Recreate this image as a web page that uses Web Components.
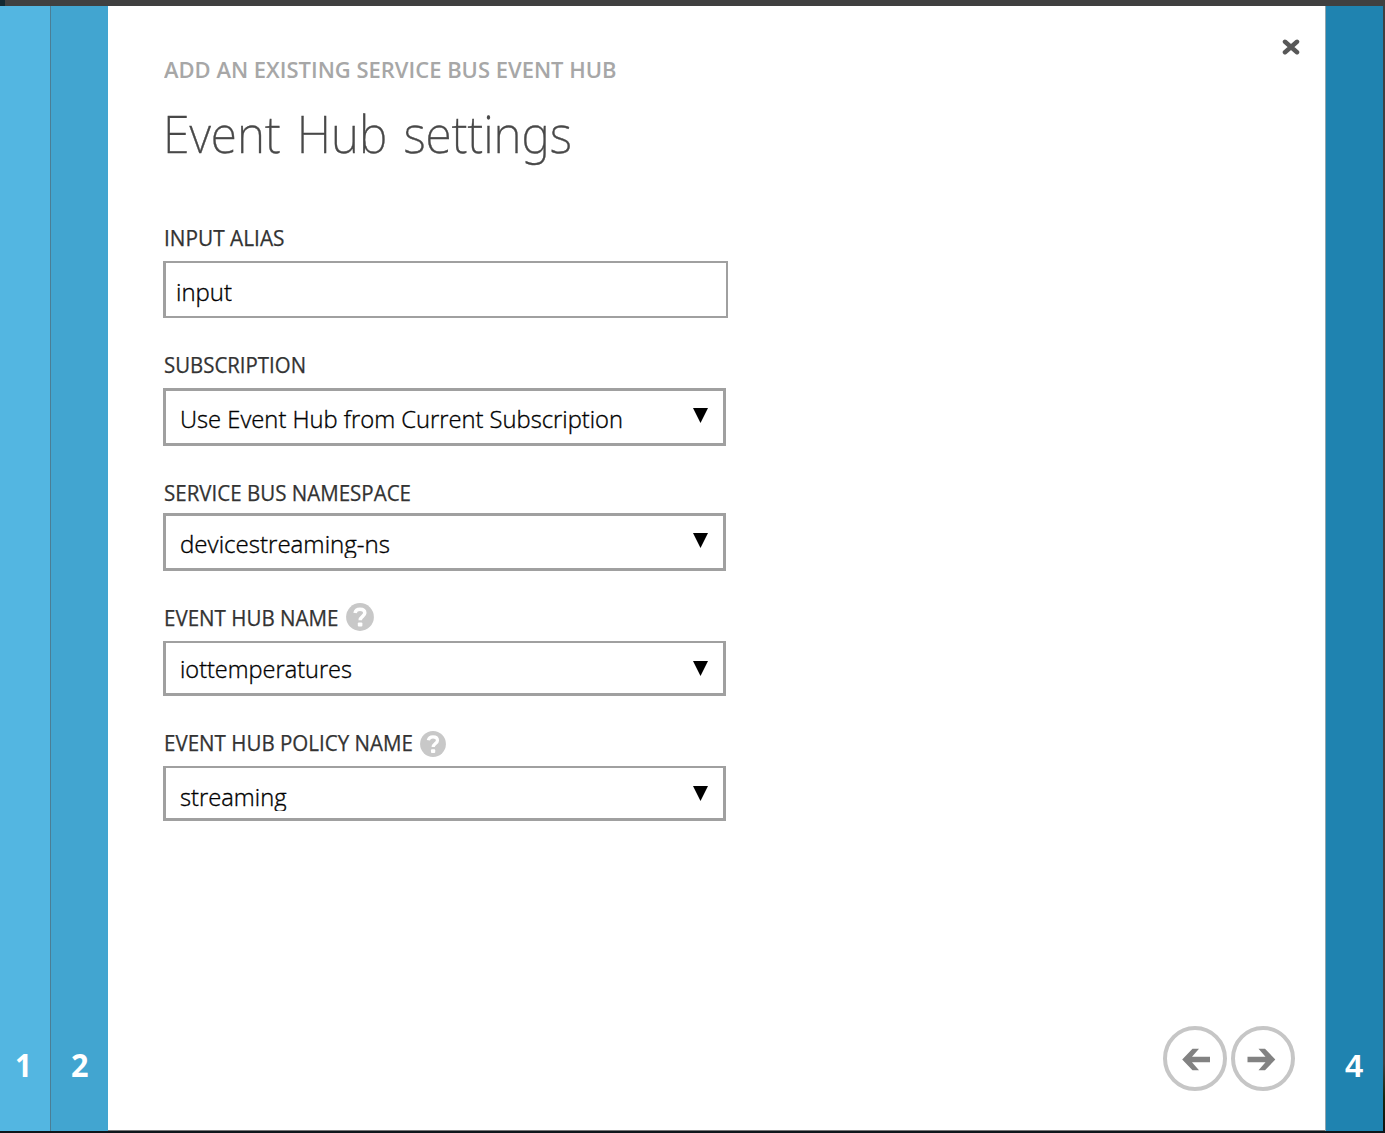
<!DOCTYPE html>
<html lang="en"><head><meta charset="utf-8"><title>Event Hub settings</title>
<style>html,body{margin:0;height:100%;overflow:hidden}body{font-family:"Open Sans","Noto Sans",sans-serif;background:#fff}</style></head>
<body>
<wizard-dialog>
  <wizard-step slot="before" number="1" style="--w:50px;--bg:#53b6e1;--nx:14.5px" text-width="17"></wizard-step>
  <wizard-step slot="before" number="2" style="--w:57px;--bg:#42a5d0;--nx:19.5px;--line:#4b7e95" text-width="17.5"></wizard-step>
  <fit-text slot="kicker" width="452.5">ADD AN EXISTING SERVICE BUS EVENT HUB</fit-text>
  <fit-text slot="title" width="409">Event Hub settings</fit-text>
  <form-field label="INPUT ALIAS" label-width="120.5" value="input" value-width="56" kind="text" style="--w:565px;--h:57px;--bw:2px 2px 2px 3px;--pl:9.5px;--pt:13px;--lh:32px"></form-field>
  <form-field label="SUBSCRIPTION" label-width="142" value="Use Event Hub from Current Subscription" value-width="443" style="--h:58px;--pt:12px;--lh:32px"></form-field>
  <form-field label="SERVICE BUS NAMESPACE" label-width="247" value="devicestreaming-ns" value-width="210" style="--h:58px;--gap:6px"></form-field>
  <form-field label="EVENT HUB NAME" label-width="174.5" value="iottemperatures" value-width="172" help="28" style="--h:55px;--bw:2px 3px 3px 3px;--pt:10px;--lh:32px;--at:17.5px"></form-field>
  <form-field label="EVENT HUB POLICY NAME" label-width="249" value="streaming" value-width="106.5" help="26" style="--h:55px;--bw:2px 3px 3px 3px;--pt:15px;--at:17.5px"></form-field>
  <nav-button slot="nav" direction="back"></nav-button>
  <nav-button slot="nav" direction="next"></nav-button>
  <wizard-step slot="after" number="4" style="--w:57px;--bg:#1f83b0;--nx:18.5px;--line:#8fa5af;--nf:'Liberation Sans',sans-serif;--nb:-1px" text-width="18"></wizard-step>
</wizard-dialog>
<script>
// Text scaled horizontally to a given advance width.
class FitText extends HTMLElement{
  constructor(){super();this.attachShadow({mode:'open'}).innerHTML=`<style>:host{display:block;white-space:nowrap;flex:none}span{display:inline-block;transform-origin:0 50%}</style><span><slot></slot></span>`}
  connectedCallback(){this.fit()}
  fit(){const s=this.shadowRoot.querySelector('span'),w=parseFloat(this.getAttribute('width'));
    s.style.transform='none';const n=s.getBoundingClientRect().width;
    if(n&&w){s.style.transform=`scaleX(${w/n})`;this.style.width=w+'px'}}
}
class HelpIcon extends HTMLElement{
  connectedCallback(){const s=this.getAttribute('size');
    this.attachShadow({mode:'open'}).innerHTML=`<style>:host{display:block;flex:none}svg{display:block}</style>
    <svg width="${s}" height="${s}" viewBox="0 0 28 28"><circle cx="14" cy="14" r="13.9" fill="#c8c8c8"/><path d="M9 10C9.5 7.4 11.3 6.3 14 6.3c2.9 0 4.8 1.5 4.8 3.8 0 3.3-4.6 3.4-4.6 7.2" fill="none" stroke="#fff" stroke-width="3.5"/><rect x="11.8" y="19.6" width="4.6" height="4" rx="1" fill="#fff"/></svg>`}
}
class WizardStep extends HTMLElement{
  connectedCallback(){const line=this.style.getPropertyValue('--line');
    this.attachShadow({mode:'open'}).innerHTML=`<style>:host{display:flex;align-items:flex-end;box-sizing:content-box;width:var(--w);background:var(--bg);${line?'border-left:1px solid var(--line);':''}color:#fff;font:700 31.5px/44px var(--nf,"Open Sans"),sans-serif;flex:none}
    fit-text{padding:0 0 calc(44px + var(--nb,0px)) var(--nx)}</style><fit-text width="${this.getAttribute('text-width')}">${this.getAttribute('number')}</fit-text>`}
}
class FormField extends HTMLElement{
  connectedCallback(){const a=n=>this.getAttribute(n);
    this.attachShadow({mode:'open'}).innerHTML=`<style>
    :host{display:block}
    .label{display:flex;align-items:flex-start;height:28px;gap:7px;margin:0 0 var(--gap,9px) 1px;color:#333;font-size:21px;line-height:28px;-webkit-text-stroke:.25px #333}
    help-icon{margin-top:${a('help')==='26'?'1.5px':'-1px'}}
    .box{display:flex;justify-content:space-between;align-items:flex-start;box-sizing:border-box;width:var(--w,563px);height:var(--h);border:solid #a0a0a0;border-width:var(--bw,3px);padding:0 15px 0 var(--pl,14px);background:#fff}
    .value{margin-top:var(--pt,14px);font-size:23px;font-weight:300;-webkit-text-stroke:.35px #000;line-height:calc(var(--lh,28px) + 1px);height:var(--lh,28px);overflow:hidden;color:#000}
    svg{display:block;margin-top:var(--at,17px)}
    </style><div class="label"><fit-text width="${a('label-width')}">${a('label')}</fit-text>${a('help')?`<help-icon size="${a('help')}"></help-icon>`:''}</div>
    <div class="box"><fit-text class="value" width="${a('value-width')}">${a('value')}</fit-text>${a('kind')==='text'?'':'<svg width="15" height="15"><path d="M0 0H15L7.5 15Z"/></svg>'}</div>`}
}
class NavButton extends HTMLElement{
  connectedCallback(){const next=this.getAttribute('direction')==='next';
    this.attachShadow({mode:'open'}).innerHTML=`<style>:host{display:block}svg{display:block}</style>
    <svg width="64" height="65" viewBox="0 0 64 65"><ellipse cx="32" cy="32.5" rx="30" ry="30.5" fill="#fff" stroke="#c6c6c6" stroke-width="4"/>
    <path ${next?'transform="translate(63.5 0) scale(-1 1)"':''} d="M19.2 33.5 29.5 22.8H36L29 30.7H47V36.2H29L36 44.2H29.5Z" fill="#828282"/></svg>`}
}
class CloseButton extends HTMLElement{
  constructor(){super();this.attachShadow({mode:'open'}).innerHTML=`<style>:host{display:block}svg{display:block}</style><svg width="18" height="16"><path d="M3 2.8 15 13.2M15 2.8 3 13.2" stroke="#585858" stroke-width="4.5" stroke-linecap="round"/></svg>`}
}
class WizardDialog extends HTMLElement{
  constructor(){super();this.attachShadow({mode:'open'}).innerHTML=`<style>
  :host{display:flex;flex-direction:column;width:1385px;height:1133px;background:#fff}
  .top{height:6px;background:linear-gradient(90deg,#142a33 5px,#404040 5px);flex:none}
  .row{display:flex;flex:1;min-height:0}
  main{flex:1;display:flex;flex-direction:column;justify-content:space-between;background:#fff;border-bottom:1px solid #777;box-sizing:border-box}
  .head{display:flex;justify-content:space-between;padding:0 25px 0 55px}
  close-button{margin-top:33px}
  .kicker{margin:47px 0 0 1px;font-size:22px;font-weight:600;line-height:32px;color:#a7a7a7}
  .title{margin:12px 0 0 0;font-family:"Noto Sans","Open Sans",sans-serif;font-size:52px;font-weight:250;word-spacing:4px;-webkit-text-stroke:.4px #484848;line-height:72px;color:#484848}
  .fields{display:flex;flex-direction:column;gap:33px;margin-top:55px}
  nav{display:flex;justify-content:flex-end;gap:4px;padding:0 30px 39px 0}
  .edge{width:2px;background:linear-gradient(#404040 94%,#17280e 97%,#111)}
  .bottom{height:2px;background:#0e151a;flex:none}
  </style><div class="top"></div><div class="row"><slot name="before"></slot>
  <main><div class="head"><div><div class="kicker"><slot name="kicker"></slot></div><div class="title"><slot name="title"></slot></div><div class="fields"><slot></slot></div></div><close-button></close-button></div>
  <nav><slot name="nav"></slot></nav></main><slot name="after"></slot><div class="edge"></div></div><div class="bottom"></div>`}
}
for(const [n,c] of [['wizard-dialog',WizardDialog],['fit-text',FitText],['help-icon',HelpIcon],['close-button',CloseButton],['wizard-step',WizardStep],['form-field',FormField],['nav-button',NavButton]])customElements.define(n,c);
document.querySelectorAll('wizard-dialog > fit-text').forEach(t=>t.fit());
</script>
</body></html>
